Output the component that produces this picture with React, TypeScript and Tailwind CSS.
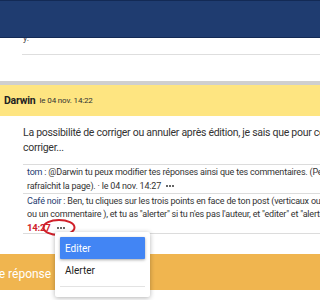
import React from "react";

function Dots() {
  return (
    <span className="inline-flex items-center gap-[1px] align-middle">
      <span className="w-[2px] h-[2px] rounded-full bg-[#333]" />
      <span className="w-[2px] h-[2px] rounded-full bg-[#333]" />
      <span className="w-[2px] h-[2px] rounded-full bg-[#333]" />
    </span>
  );
}

export default function App() {
  return (
    <div
      className="relative w-[320px] h-[300px] overflow-hidden bg-white text-[#333]"
      style={{ fontFamily: "Roboto, 'Liberation Sans', sans-serif" }}
    >
      <div className="h-[38px] bg-[#1f3c70] border-t border-b border-[#132a55]" />
      <div className="h-[43px] relative">
        <div className="h-[5px] overflow-hidden pl-[23px] flex items-end">
          <span className="text-[9px] leading-[9px] text-[#444]">y.</span>
        </div>
        <div className="ml-[22px] mt-[11px] border-t border-[#dedede]" />
      </div>
      <div className="h-[4px] bg-[#cfcfcf]" />
      <div className="h-[31px] bg-[#fee581] flex items-center pl-[4px] gap-[4px]">
        <span className="text-[10.5px] font-bold text-[#222] tracking-[-0.2px]">Darwin</span>
        <span className="text-[8px] text-[#333] mt-[1px] tracking-[-0.15px]">le 04 nov. 14:22</span>
      </div>
      <div className="pl-[23px] pt-[9px] text-[10.5px] leading-[15px] tracking-[-0.28px] text-[#333] whitespace-nowrap">
        <div>La possibilité de corriger ou annuler après édition, je sais que pour certains</div>
        <div>corriger...</div>
      </div>
      <div className="ml-[23px] mt-[9px] border-t border-[#dcdcdc]" />
      <div className="pl-[27px] text-[9px] leading-[14px] tracking-[-0.2px] text-[#333] whitespace-nowrap">
        <div>
          <span className="text-[#1f3c70]">tom</span> : @Darwin tu peux modifier tes réponses ainsi que tes commentaires. (Pense
        </div>
        <div className="flex items-center">
          <span>rafraîchit la page). · le 04 nov. 14:27</span>
          <span className="ml-[5px] flex"><Dots /></span>
        </div>
      </div>
      <div className="ml-[23px] border-t border-[#dcdcdc]" />
      <div className="pl-[27px] pt-[1px] text-[9px] leading-[13px] tracking-[-0.2px] text-[#333] whitespace-nowrap">
        <div>
          <span className="text-[#1f3c70]">Café noir</span> : Ben, tu cliques sur les trois points en face de ton post (verticaux ou
        </div>
        <div>ou un commentaire ), et tu as "alerter" si tu n'es pas l'auteur, et "editer" et "alerter"</div>
        <div className="flex items-center">
          <span className="w-[24px] text-[#d0202a] font-bold text-[9.5px]">14:27</span>
          <span className="ml-[6px] flex"><Dots /></span>
        </div>
      </div>
      <div className="ml-[23px] mt-[-1px] border-t border-[#dcdcdc]" />
      <div className="mt-[20px] h-[36px] bg-[#f0b54f] flex items-center">
        <span className="text-white text-[12px] -ml-[56px] mt-[4px] whitespace-nowrap">Ajouter une réponse</span>
      </div>

      <svg className="absolute left-[42px] top-[218px]" width="34" height="19" viewBox="0 0 34 19">
        <ellipse cx="17" cy="9.5" rx="15.5" ry="7.5" fill="none" stroke="#d0202a" strokeWidth="2" />
      </svg>

      <div className="absolute left-[55px] top-[232px] w-[95px] h-[65px] bg-white rounded-[2px] shadow-[0_1px_5px_rgba(0,0,0,0.3)] px-[5px] pt-[5px]">
        <div className="h-[22px] bg-[#4285f4] rounded-[1px] shadow-[0_1px_3px_rgba(0,0,0,0.35)] flex items-center pl-[5px] text-white text-[10px]">
          Editer
        </div>
        <div className="h-[22px] flex items-center pl-[5px] text-[10px] text-[#222]">Alerter</div>
        <div className="mt-[5px] border-t border-[#e3e3e3]" />
      </div>
    </div>
  );
}
